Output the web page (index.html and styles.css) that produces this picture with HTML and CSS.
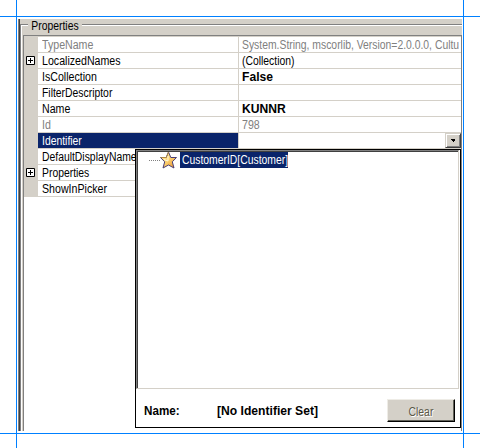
FILE: index.html
```html
<!DOCTYPE html>
<html lang="en">
<head>
<meta charset="utf-8">
<title>Properties</title>
<link rel="stylesheet" href="styles.css">
</head>
<body>
<main class="window">
  <section class="panel">
    <h1 class="caption"><span class="t">Properties</span></h1>
    <div class="grid">
      <div class="row muted"><i class="gutter"></i><div class="name"><span class="t wide">TypeName</span></div><div class="value"><span class="t">System.String, mscorlib, Version=2.0.0.0, Cultu</span></div></div>
      <div class="row"><i class="gutter"><svg width="9" height="9" class="plus"><path d="M.5.5h8v8h-8zM2 4.500h5M4.500 2v5"/></svg></i><div class="name"><span class="t wide">LocalizedNames</span></div><div class="value"><span class="t">(Collection)</span></div></div>
      <div class="row"><i class="gutter"></i><div class="name"><span class="t wide">IsCollection</span></div><div class="value"><span class="t b">False</span></div></div>
      <div class="row"><i class="gutter"></i><div class="name"><span class="t">FilterDescriptor</span></div><div class="value"></div></div>
      <div class="row"><i class="gutter"></i><div class="name"><span class="t wide">Name</span></div><div class="value"><span class="t b">KUNNR</span></div></div>
      <div class="row muted"><i class="gutter"></i><div class="name"><span class="t wide">Id</span></div><div class="value"><span class="t wide">798</span></div></div>
      <div class="row selected"><i class="gutter"></i><div class="name"><span class="t">Identifier</span></div><div class="value"><button class="drop" aria-label="Open"><svg width="5" height="3"><path d="M0 0h5v1H4v1H3v1H2V2H1V1H0z"/></svg></button></div></div>
      <div class="row"><i class="gutter"></i><div class="name"><span class="t">DefaultDisplayName</span></div><div class="value"></div></div>
      <div class="row"><i class="gutter"><svg width="9" height="9" class="plus"><path d="M.5.5h8v8h-8zM2 4.500h5M4.500 2v5"/></svg></i><div class="name"><span class="t">Properties</span></div><div class="value"></div></div>
      <div class="row"><i class="gutter"></i><div class="name"><span class="t wide">ShowInPicker</span></div><div class="value"></div></div>
    </div>
  </section>
</main>
<div class="popup">
  <div class="tree">
    <i class="dots"></i>
    <svg class="star" width="17" height="17" viewBox="0 0 17 17">
      <defs><linearGradient id="g" x1="0" y1="0" x2="1" y2="1"><stop offset="0" stop-color="#fff0a0"/><stop offset=".5" stop-color="#fcd070"/><stop offset="1" stop-color="#e58a28"/></linearGradient></defs>
      <path d="M8.500 0L10.800 5.500H16.500L12.300 9.800L14 16L8.500 13L3 16L4.700 9.800L.5 5.500H6.200Z" fill="url(#g)" stroke="#4a4078" stroke-width="1"/>
      <path d="M.5 5.500H6.200L8.500 0" fill="none" stroke="#b08a48"/>
      <path d="M8 4v5M4 7.500l4 1.500" stroke="#fffbe0" fill="none"/>
    </svg>
    <span class="node"><span class="t">CustomerID[Customer]</span></span>
  </div>
  <footer class="foot">
    <span class="key"><span class="t b">Name:</span></span>
    <span class="none"><span class="t b">[No Identifier Set]</span></span>
    <button class="clear"><span class="t">Clear</span></button>
  </footer>
</div>
<i class="guide top"></i><i class="guide bottom"></i><i class="guide left"></i><i class="guide right"></i>
</body>
</html>
```

FILE: styles.css
```css
* { box-sizing: border-box; }
body {
  margin: 0;
  width: 480px;
  height: 448px;
  overflow: hidden;
  position: relative;
  background: #fff;
  color: #000;
  font: 12.5px/15px "Liberation Sans", Arial, sans-serif;
}
.t {
  display: inline-block;
  white-space: nowrap;
  transform: scaleX(.83);
  transform-origin: 0 50%;
}
.wide { transform: scaleX(.85); }
.b { font-weight: bold; font-size: 12px; transform: scaleX(1.01); }
.window {
  margin: 0 0 0 18px;
  padding-top: 19px;
  width: 444px;
  height: 431px;
}
.panel {
  height: 412px;
  border-left: 1px solid #808080;
  box-shadow: inset 1px 0 #404040, inset 2px 0 #808080, inset 3px 0 #fff, inset 4px 0 #d4d0c8;
  display: flex;
  flex-direction: column;
}
.caption {
  margin: 0 0 0 1px;
  height: 16px;
  font: inherit;
  display: flex;
  background:
    linear-gradient(to right, #808080 1px, #fff 1px) 0 6px / 2px 10px no-repeat,
    linear-gradient(#d4d0c8 5px, #808080 5px 6px, #fff 6px 7px, #d4d0c8 7px);
}
.caption .t { margin-left: 8px; padding: 0 4px; background: #d4d0c8; }
.grid {
  margin-left: 4px;
  flex: 1;
  border: 1px solid #808080;
  border-bottom: 0;
  padding-top: 1px;
  background: linear-gradient(#d4d0c8 1px, #fff 1px);
}
.row { display: flex; height: 16px; line-height: 17px; }
.gutter {
  width: 14px;
  background: #d4d0c8;
  display: flex;
  align-items: flex-start;
  justify-content: center;
  padding-top: 3px;
}
.plus { fill: #fff; stroke: #000; stroke-width: 1; margin-right: 1px; }
.name {
  width: 201px;
  padding-left: 4px;
  border-right: 1px solid #d4d0c8;
  border-bottom: 1px solid #d4d0c8;
}
.value {
  flex: 1;
  min-width: 0;
  padding-left: 3px;
  border-bottom: 1px solid #d4d0c8;
}
.muted { color: #808080; }
.selected .name { background: #0a246a; color: #fff; }
.selected .value { display: flex; justify-content: flex-end; }
.drop {
  width: 16px;
  height: 15px;
  padding: 0;
  border: 1px solid;
  border-color: #d4d0c8 #404040 #404040 #d4d0c8;
  box-shadow: inset 1px 1px #fff, inset -1px -1px #808080;
  background: #d4d0c8;
  display: flex;
  align-items: center;
  justify-content: center;
}
.drop svg { width: 4px; height: 3px; }
.popup {
  position: absolute;
  left: 135px;
  top: 149px;
  width: 326px;
  height: 279px;
  border: 1px solid #000;
  background: #fff;
}
.tree {
  height: 239px;
  width: 323px;
  border: 1px solid;
  border-color: #808080 #d4d0c8 #d4d0c8 #808080;
  box-shadow: inset 1px 1px #404040;
  display: flex;
  align-items: flex-start;
  padding: 1px 0 0 12px;
}
.dots { width: 11px; margin-top: 8px; border-top: 1px dotted #808080; }
.star { display: block; }
.node {
  margin: 0 0 0 3px;
  padding-left: 2px;
  width: 108px;
  height: 16px;
  line-height: 17px;
  color: #fff;
  background: #0a246a;
}
.foot { display: flex; padding: 10px 5px 0 8px; line-height: 24px; }
.key { width: 73px; }
.key .b { transform: scaleX(.97); }
.none { flex: 1; }
.clear {
  width: 68px;
  height: 23px;
  padding: 0;
  color: #5a5848;
  font: inherit;
  background: #d4d0c8;
  border: 1px solid;
  border-color: #eeece6 #000 #000 #eeece6;
  box-shadow: inset -1px -1px #606058;
}
.clear .t { transform-origin: 50% 50%; text-shadow: 1px 1px #fff; }
.guide { position: absolute; background: #0080ff; }
.top, .bottom { left: 0; width: 480px; height: 1px; }
.top { top: 16px; }
.bottom { top: 433px; }
.left, .right { top: 0; width: 1px; height: 448px; }
.left { left: 16px; }
.right { left: 463px; }
```
